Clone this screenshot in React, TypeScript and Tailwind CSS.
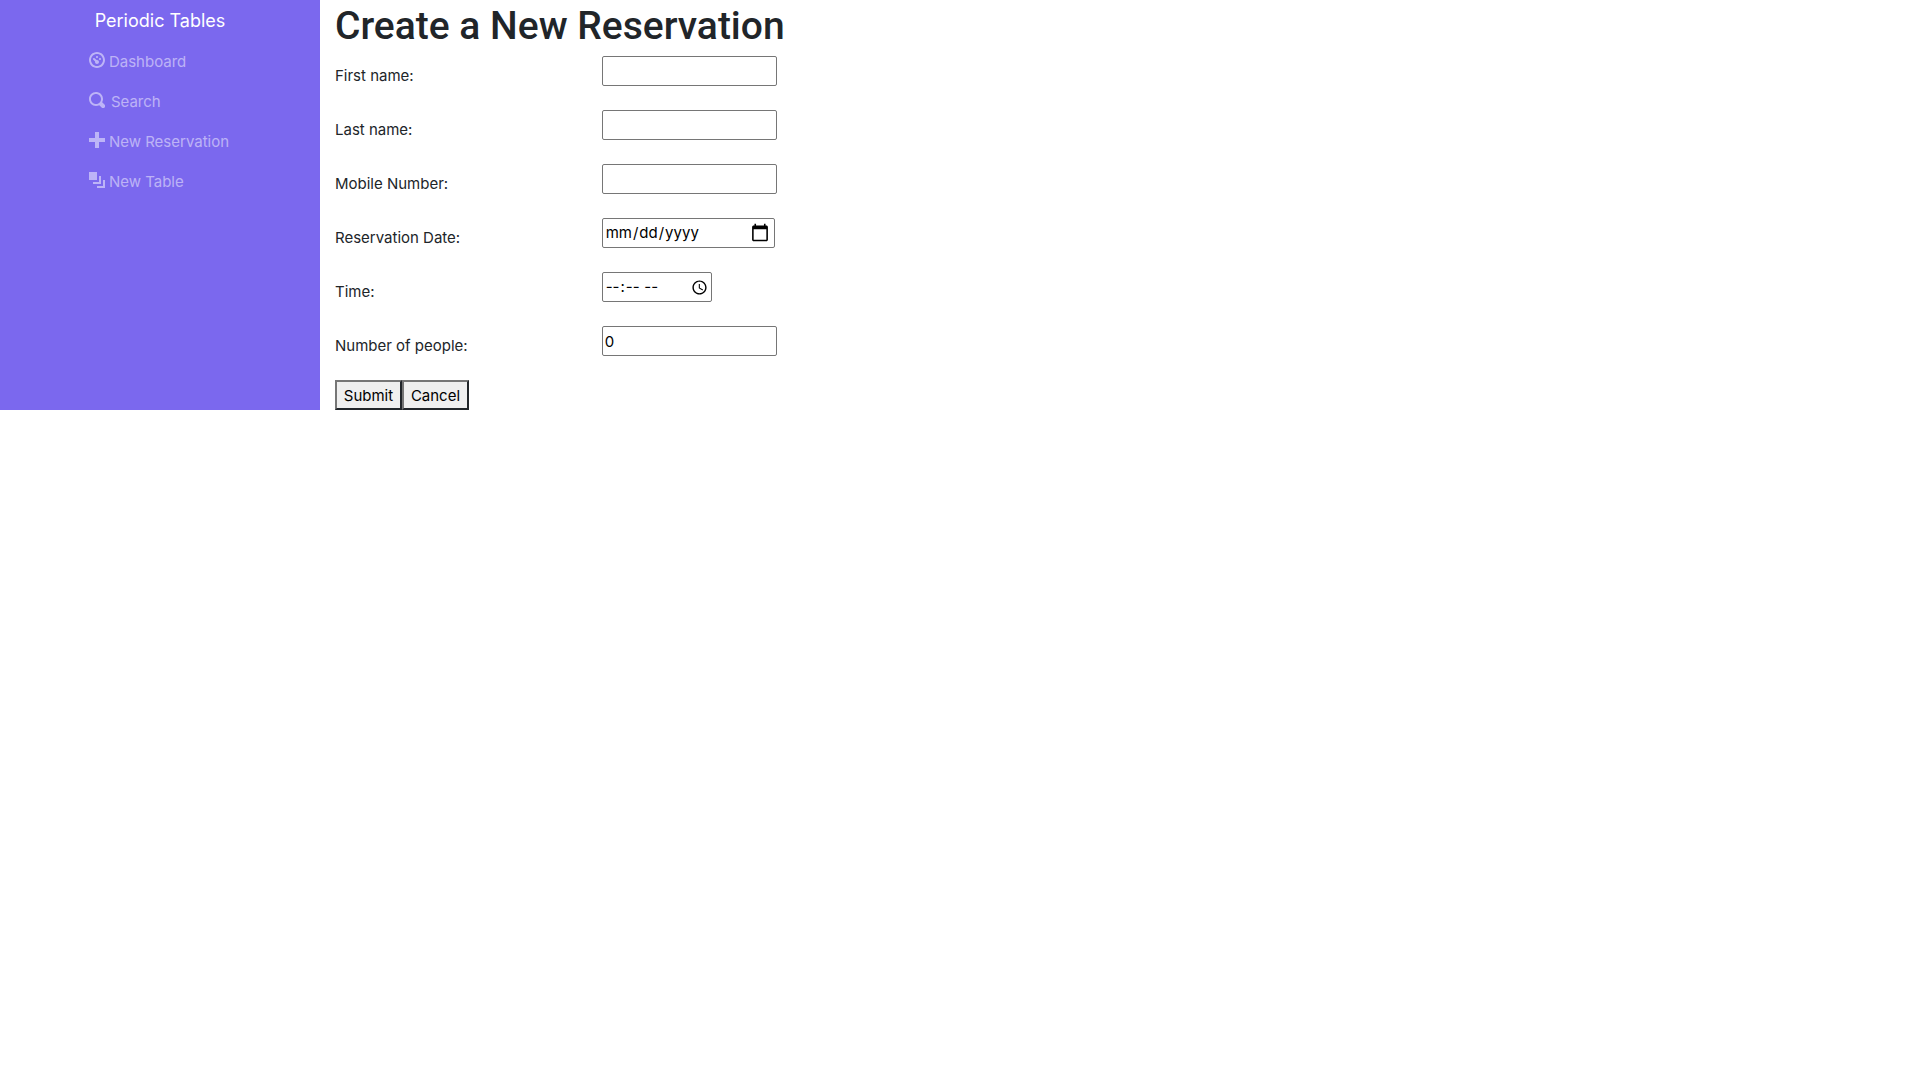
import { useState } from "react";

type IconProps = { path: string };

function Icon({ path }: IconProps) {
  return (
    <svg viewBox="0 0 8 8" className="size-4 shrink-0 fill-current" aria-hidden="true">
      <path d={path} />
    </svg>
  );
}

const links = [
  {
    label: "Dashboard",
    href: "#dashboard",
    gap: "gap-1",
    path: "M4 0c-2.2 0-4 1.8-4 4s1.8 4 4 4 4-1.8 4-4-1.8-4-4-4zm0 1c1.66 0 3 1.34 3 3s-1.34 3-3 3-3-1.34-3-3 1.34-3 3-3zm0 1c-.28 0-.5.22-.5.5s.22.5.5.5.5-.22.5-.5-.22-.5-.5-.5zm-1.66 1a.5.5 0 0 0-.19.84l.91.91c-.02.08-.06.16-.06.25 0 .55.45 1 1 1s1-.45 1-1-.45-1-1-1c-.09 0-.17.04-.25.06l-.91-.91a.5.5 0 0 0-.44-.16.5.5 0 0 0-.06 0zm3.16 0c-.28 0-.5.22-.5.5s.22.5.5.5.5-.22.5-.5-.22-.5-.5-.5z",
  },
  {
    label: "Search",
    href: "#search",
    gap: "gap-1.5",
    path: "M3.5 0c-1.93 0-3.5 1.57-3.5 3.5s1.57 3.5 3.5 3.5c.59 0 1.17-.14 1.66-.41a1 1 0 0 0 .13.13l1 1a1.02 1.02 0 1 0 1.44-1.44l-1-1a1 1 0 0 0-.16-.13c.27-.49.44-1.06.44-1.66 0-1.93-1.55-3.5-3.5-3.5zm0 1c1.39 0 2.5 1.1 2.5 2.5 0 .66-.24 1.27-.66 1.72a1 1 0 0 0-.13.13c-.44.4-1.05.66-1.72.66-1.4 0-2.5-1.11-2.5-2.5s1.1-2.5 2.5-2.5z",
  },
  {
    label: "New Reservation",
    href: "#new-reservation",
    gap: "gap-1",
    path: "M3 0v3h-3v2h3v3h2v-3h3v-2h-3v-3h-2z",
  },
  {
    label: "New Table",
    href: "#new-table",
    gap: "gap-1",
    path: "M0 0v4h4v-4h-4zm5 2v3h-3v1h4v-4h-1zm2 2v3h-3v1h4v-4h-1z",
  },
];

const fields = [
  { id: "first_name", label: "First name:", type: "text", look: "w-[175px] px-0.5" },
  { id: "last_name", label: "Last name:", type: "text", look: "w-[175px] px-0.5" },
  { id: "mobile_number", label: "Mobile Number:", type: "tel", look: "w-[175px] px-0.5" },
  {
    id: "reservation_date",
    label: "Reservation Date:",
    type: "date",
    look: "w-[173px] px-0.5 [&::-webkit-calendar-picker-indicator]:size-5",
  },
  {
    id: "reservation_time",
    label: "Time:",
    type: "time",
    look: "w-[110px] pl-0.5 [&::-webkit-calendar-picker-indicator]:size-[17px]",
  },
  { id: "people", label: "Number of people:", type: "number", look: "w-[175px] px-0.5" },
];

function Sidebar() {
  return (
    <nav className="flex w-1/6 shrink-0 flex-col items-center bg-[#7b68ee]">
      <a href="#home" className="flex h-10 items-center pt-0.5 text-lg text-white">
        Periodic Tables
      </a>
      <ul>
        {links.map((link) => (
          <li key={link.label}>
            <a
              href={link.href}
              className={`flex h-10 items-center px-4 whitespace-nowrap text-white/50 ${link.gap}`}
            >
              <Icon path={link.path} />
              <span className="pt-1 pr-0.5">{link.label}</span>
            </a>
          </li>
        ))}
      </ul>
    </nav>
  );
}

function ReservationForm() {
  const [values, setValues] = useState<Record<string, string>>({ people: "0" });
  return (
    <form onSubmit={(event) => event.preventDefault()}>
      {fields.map((field) => (
        <div key={field.id} className="-mx-[15px] mb-4 flex h-[38px] items-start">
          <label htmlFor={field.id} className="w-1/6 shrink-0 px-[15px] pt-2 whitespace-nowrap">
            {field.label}
          </label>
          <div className="px-[15px]">
            <input
              id={field.id}
              name={field.id}
              type={field.type}
              value={values[field.id] ?? ""}
              onChange={(event) => setValues({ ...values, [field.id]: event.target.value })}
              className={`block h-[30px] rounded-xs border border-[#767676] bg-white text-black ${field.look}`}
            />
          </div>
        </div>
      ))}
      <div className="flex text-black">
        <button type="submit" className="h-[30px] min-w-[67px] border-2 border-[#212529] border-t-[#767676] border-l-[#767676] bg-[#efefef] px-1.5 pt-0.5">
          Submit
        </button>
        <button type="button" className="h-[30px] min-w-[67px] border-2 border-[#212529] border-t-[#767676] border-l-[#767676] bg-[#efefef] px-1.5 pt-0.5">
          Cancel
        </button>
      </div>
    </form>
  );
}

export default function App() {
  return (
    <div className="flex bg-white font-[Inter,sans-serif] text-[15px] leading-6 text-[#212529]">
      <Sidebar />
      <main className="min-w-0 flex-1 px-[15px]">
        <h1 className="mb-1 font-[Roboto,sans-serif] text-[39px] leading-[52px] font-medium">Create a New Reservation</h1>
        <ReservationForm />
      </main>
    </div>
  );
}
